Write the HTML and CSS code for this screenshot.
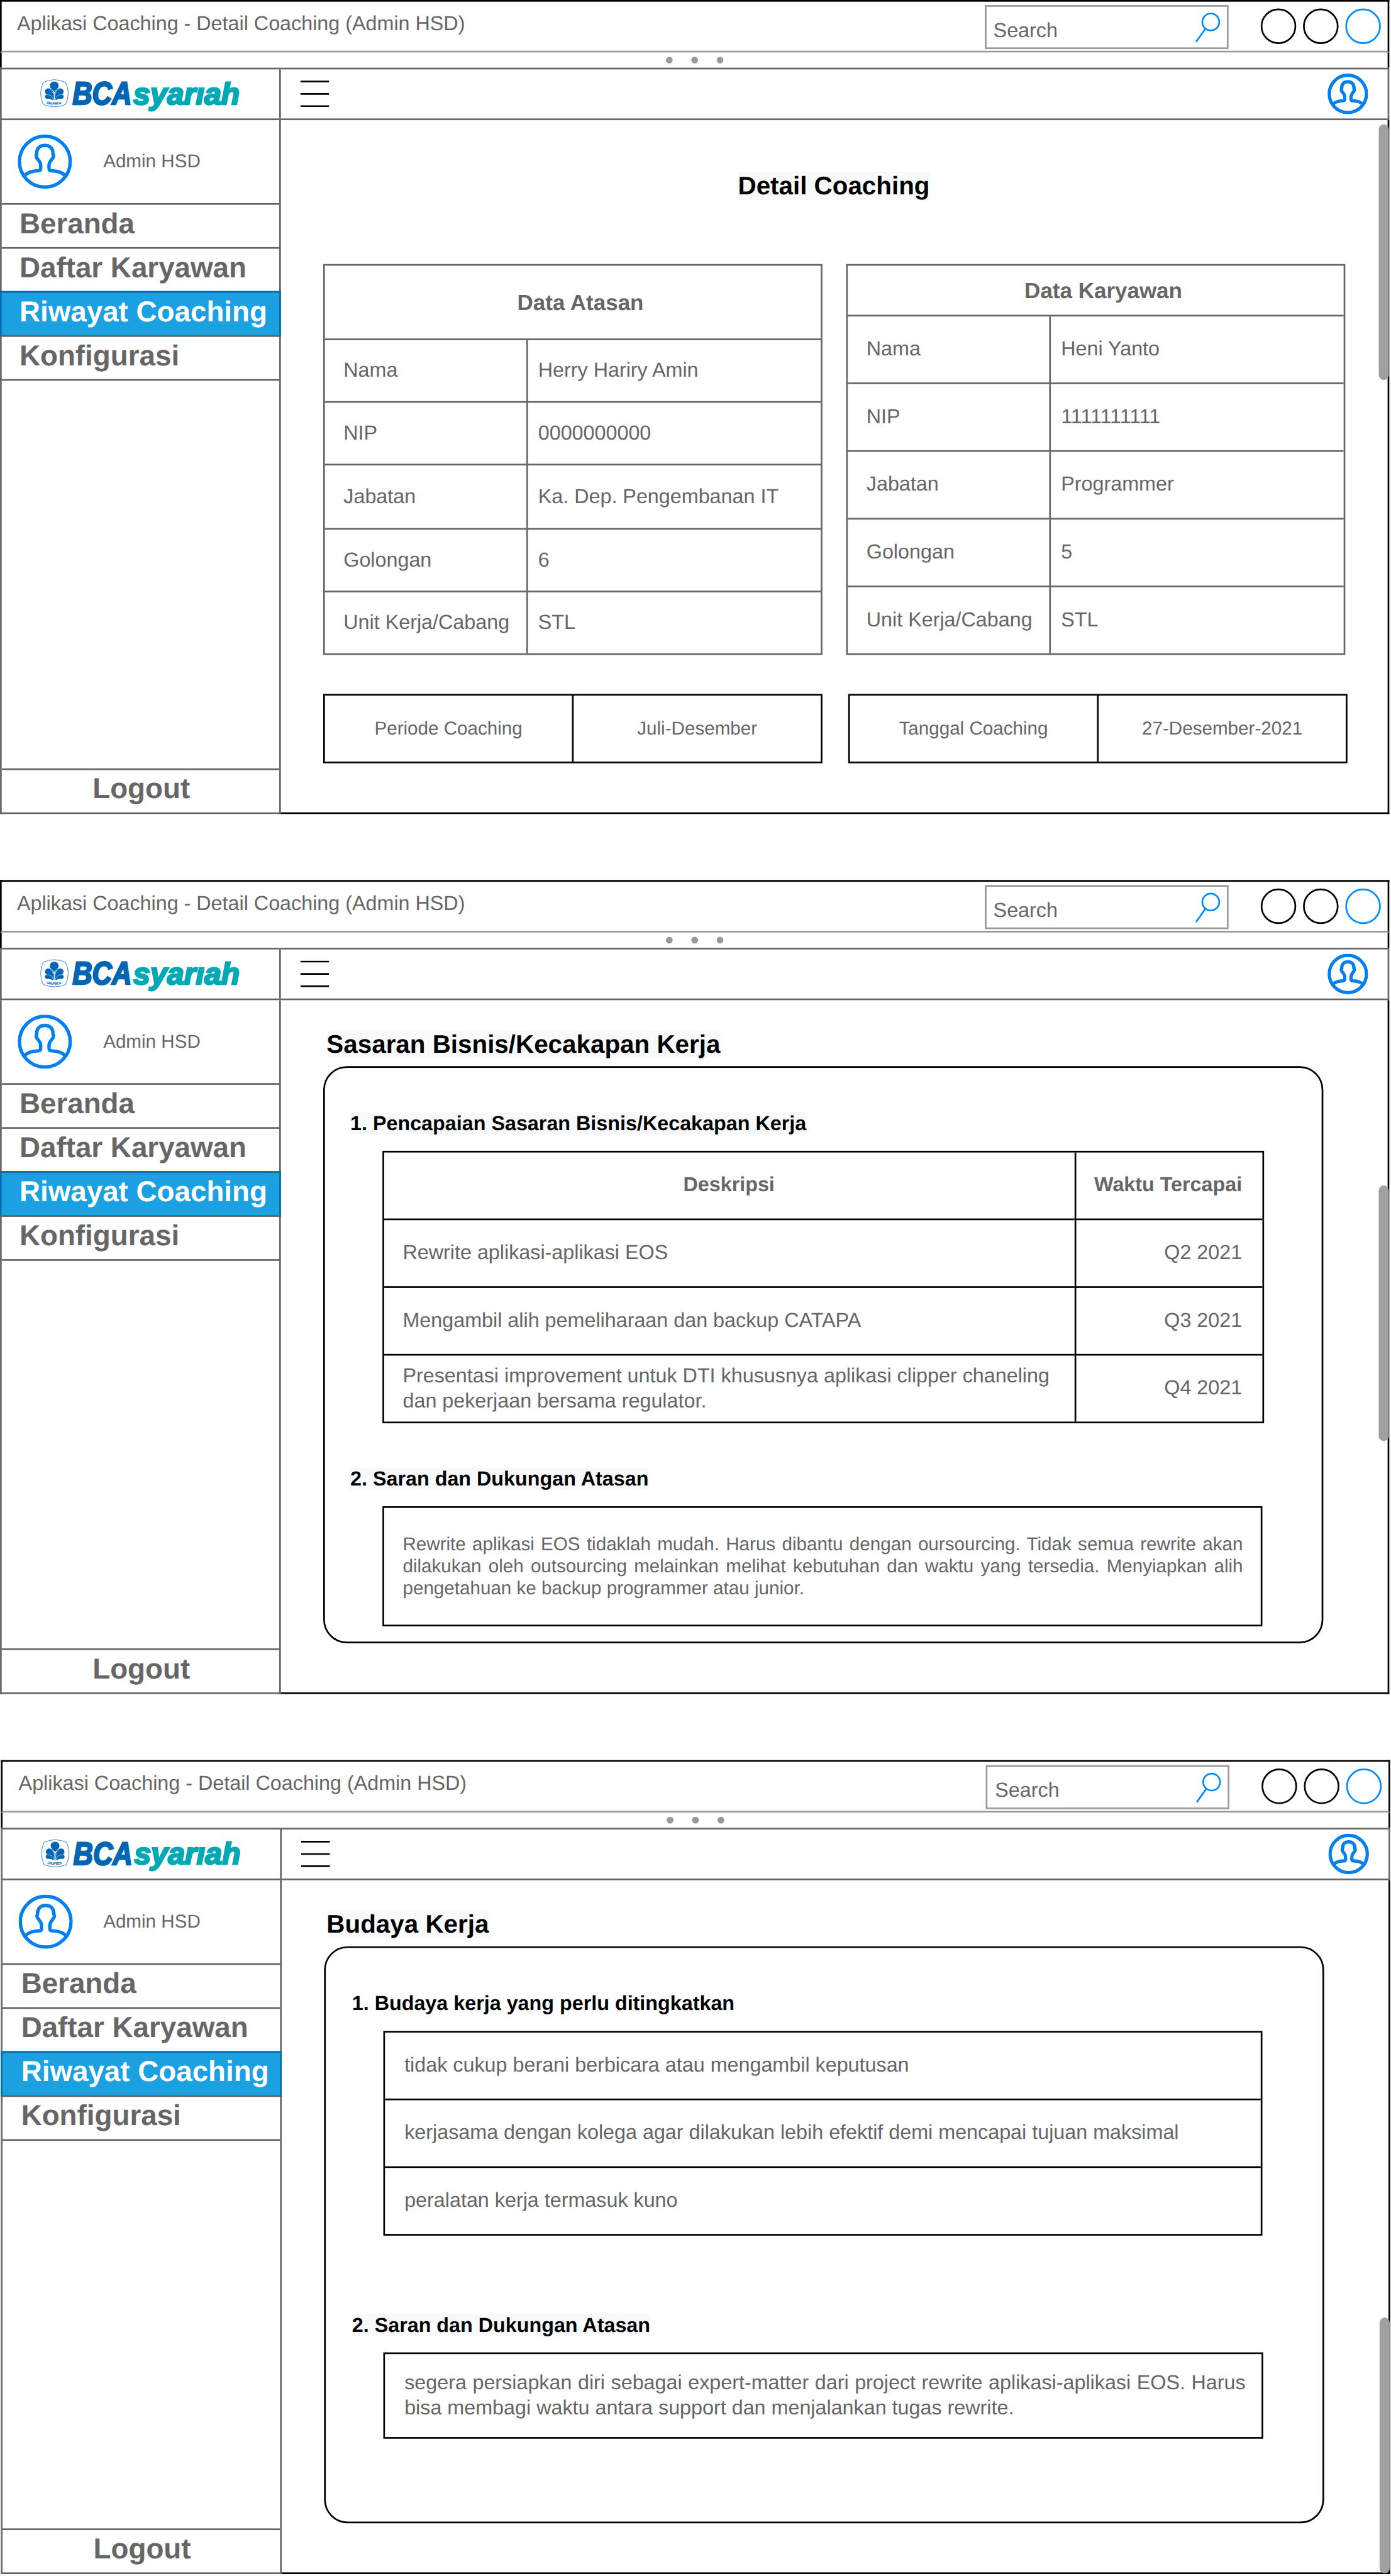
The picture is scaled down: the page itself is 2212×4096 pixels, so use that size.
FILE: index.html
```html
<!DOCTYPE html>
<html lang="id">
<head>
<meta charset="utf-8">
<title>Aplikasi Coaching - Detail Coaching</title>
<link rel="stylesheet" href="styles.css">
</head>
<body>
<svg class="sprites" width="0" height="0" aria-hidden="true">
  <symbol id="magnifier" viewBox="706 7 16 19">
    <circle cx="715.5" cy="13" r="5"/>
    <path d="M712.3 17 L706.8 24.8"/>
  </symbol>
  <symbol id="person" viewBox="-16 -16 32 32">
    <path d="M-11.8 8.1C-10 6.2-6.5 5.5-3.8 5.4Q-2.6 5.4-2.5 4.2C-2.3 1.6-2.5.7-3.8-.9C-5-2.2-5.6-3.3-4.8-4.4C-5-7.8-3-9.6 0-9.6C3-9.6 5-7.8 4.8-4.4C5.6-3.3 5-2.2 3.8-.9C2.5.7 2.3 1.6 2.5 4.2Q2.6 5.4 3.8 5.4C6.5 5.5 10 6.2 11.8 8.1"/>
  </symbol>
  <symbol id="menu-lines" viewBox="0 0 17 16">
    <path d="M0 .7H17M0 8H17M0 15.2H17"/>
  </symbol>
  <symbol id="bca" viewBox="23 46 120 22">
    <g transform="translate(15 40) scale(.0861 .08333)">
      <path fill="none" stroke="#0066b3" stroke-width="3.4" d="M122 104Q197 66 276 104Q312 180 276 261Q199 293 122 261Q88 180 122 104Z"/>
      <g fill="#0066b3">
        <path d="M197 172C192 158 168 150 168 129C168 110 181 99 198 99C215 99 228 110 228 129C228 150 205 158 200 172Z"/>
        <path id="leaf" d="M197 229L197 190C192 165 178 147 158 147C143 147 135 158 135 170C135 180 140 187 147 191C136 193 134 198 134 207C134 216 142 221 152 221C165 219 178 222 183 229Z"/>
        <use href="#leaf" transform="matrix(-1 0 0 1 397 0)"/>
      </g>
      <path fill="none" stroke="#fff" stroke-width="2.6" d="M147 192C172 190 190 206 191 230M172 154C190 172 196 190 196 230M250 192C225 190 207 206 206 230M225 154C207 172 201 190 201 230"/>
    </g>
    <path id="ring" fill="none" d="M27.4 61.3Q32.1 62.4 36.8 61.3"/>
    <text class="logo-group"><textPath href="#ring" textLength="9">GRUP BCA</textPath></text>
    <text class="logo-bca" x="42.8" y="61.7" textLength="35" lengthAdjust="spacingAndGlyphs">BCA</text>
    <text class="logo-syariah" x="78.8" y="61.6" textLength="62.9" lengthAdjust="spacingAndGlyphs">syarıah</text>
  </symbol>
</svg>

<section class="window">
  <div class="titlebar">
    <span class="title">Aplikasi Coaching - Detail Coaching (Admin HSD)</span>
    <div class="search"><span>Search</span><svg class="magnifier"><use href="#magnifier"/></svg></div>
    <i class="knob"></i><i class="knob"></i><i class="knob knob-blue"></i>
  </div>
  <div class="grip"><i></i><i></i><i></i></div>
  <div class="header">
    <div class="brand"><svg class="logo"><use href="#bca"/></svg></div>
    <svg class="menu"><use href="#menu-lines"/></svg>
    <svg class="avatar avatar-small" viewBox="-16 -16 32 32"><circle r="14.67"/><use href="#person" x="-16" y="-16" width="32" height="32"/></svg>
  </div>
  <div class="body">
    <nav class="sidebar">
      <div class="user"><svg class="avatar" viewBox="-16 -16 32 32"><circle r="15"/><use href="#person" x="-16" y="-16" width="32" height="32"/></svg><span>Admin HSD</span></div>
      <a class="item">Beranda</a>
      <a class="item">Daftar Karyawan</a>
      <a class="item active">Riwayat Coaching</a>
      <a class="item">Konfigurasi</a>
      <a class="item logout">Logout</a>
    </nav>
    <main class="main">
      <h1 class="page-title"><mark>Detail Coaching</mark></h1>
      <div class="people">
        <div class="data atasan">
          <b>Data Atasan</b>
          <span>Nama</span><span>Herry Hariry Amin</span>
          <span>NIP</span><span>0000000000</span>
          <span>Jabatan</span><span>Ka. Dep. Pengembanan IT</span>
          <span>Golongan</span><span>6</span>
          <span>Unit Kerja/Cabang</span><span>STL</span>
        </div>
        <div class="data karyawan">
          <b>Data Karyawan</b>
          <span>Nama</span><span>Heni Yanto</span>
          <span>NIP</span><span>1111111111</span>
          <span>Jabatan</span><span>Programmer</span>
          <span>Golongan</span><span>5</span>
          <span>Unit Kerja/Cabang</span><span>STL</span>
        </div>
      </div>
      <div class="dates">
        <div class="date"><span>Periode Coaching</span><span>Juli-Desember</span></div>
        <div class="date"><span>Tanggal Coaching</span><span>27-Desember-2021</span></div>
      </div>
    </main>
  </div>
  <i class="scroll scroll-top"></i>
</section>

<section class="window">
  <div class="titlebar">
    <span class="title">Aplikasi Coaching - Detail Coaching (Admin HSD)</span>
    <div class="search"><span>Search</span><svg class="magnifier"><use href="#magnifier"/></svg></div>
    <i class="knob"></i><i class="knob"></i><i class="knob knob-blue"></i>
  </div>
  <div class="grip"><i></i><i></i><i></i></div>
  <div class="header">
    <div class="brand"><svg class="logo"><use href="#bca"/></svg></div>
    <svg class="menu"><use href="#menu-lines"/></svg>
    <svg class="avatar avatar-small" viewBox="-16 -16 32 32"><circle r="14.67"/><use href="#person" x="-16" y="-16" width="32" height="32"/></svg>
  </div>
  <div class="body">
    <nav class="sidebar">
      <div class="user"><svg class="avatar" viewBox="-16 -16 32 32"><circle r="15"/><use href="#person" x="-16" y="-16" width="32" height="32"/></svg><span>Admin HSD</span></div>
      <a class="item">Beranda</a>
      <a class="item">Daftar Karyawan</a>
      <a class="item active">Riwayat Coaching</a>
      <a class="item">Konfigurasi</a>
      <a class="item logout">Logout</a>
    </nav>
    <main class="main">
      <h1 class="section-title"><mark>Sasaran Bisnis/Kecakapan Kerja</mark></h1>
      <div class="panel">
        <h2><mark>1. Pencapaian Sasaran Bisnis/Kecakapan Kerja</mark></h2>
        <div class="goals">
          <b>Deskripsi</b><b>Waktu Tercapai</b>
          <span>Rewrite aplikasi-aplikasi EOS</span><span>Q2 2021</span>
          <span>Mengambil alih pemeliharaan dan backup CATAPA</span><span>Q3 2021</span>
          <span class="two-lines">Presentasi improvement untuk DTI khususnya aplikasi clipper chaneling<br>dan pekerjaan bersama regulator.</span><span>Q4 2021</span>
        </div>
        <h2 class="advice-title"><mark>2. Saran dan Dukungan Atasan</mark></h2>
        <div class="advice"><p>Rewrite aplikasi EOS tidaklah mudah. Harus dibantu dengan oursourcing. Tidak semua rewrite akan dilakukan oleh outsourcing melainkan melihat kebutuhan dan waktu yang tersedia. Menyiapkan alih pengetahuan ke backup programmer atau junior.</p></div>
      </div>
    </main>
  </div>
  <i class="scroll scroll-middle"></i>
</section>

<section class="window shifted">
  <div class="titlebar">
    <span class="title">Aplikasi Coaching - Detail Coaching (Admin HSD)</span>
    <div class="search"><span>Search</span><svg class="magnifier"><use href="#magnifier"/></svg></div>
    <i class="knob"></i><i class="knob"></i><i class="knob knob-blue"></i>
  </div>
  <div class="grip"><i></i><i></i><i></i></div>
  <div class="header">
    <div class="brand"><svg class="logo"><use href="#bca"/></svg></div>
    <svg class="menu"><use href="#menu-lines"/></svg>
    <svg class="avatar avatar-small" viewBox="-16 -16 32 32"><circle r="14.67"/><use href="#person" x="-16" y="-16" width="32" height="32"/></svg>
  </div>
  <div class="body">
    <nav class="sidebar">
      <div class="user"><svg class="avatar" viewBox="-16 -16 32 32"><circle r="15"/><use href="#person" x="-16" y="-16" width="32" height="32"/></svg><span>Admin HSD</span></div>
      <a class="item">Beranda</a>
      <a class="item">Daftar Karyawan</a>
      <a class="item active">Riwayat Coaching</a>
      <a class="item">Konfigurasi</a>
      <a class="item logout">Logout</a>
    </nav>
    <main class="main">
      <h1 class="section-title"><mark>Budaya Kerja</mark></h1>
      <div class="panel">
        <h2>1. Budaya kerja yang perlu ditingkatkan</h2>
        <div class="habits">
          <span>tidak cukup berani berbicara atau mengambil keputusan</span>
          <span>kerjasama dengan kolega agar dilakukan lebih efektif demi mencapai tujuan maksimal</span>
          <span>peralatan kerja termasuk kuno</span>
        </div>
        <h2 class="advice-title"><mark>2. Saran dan Dukungan Atasan</mark></h2>
        <div class="advice"><p>segera persiapkan diri sebagai expert-matter dari project rewrite aplikasi-aplikasi EOS. Harus bisa membagi waktu antara support dan menjalankan tugas rewrite.</p></div>
      </div>
    </main>
  </div>
  <i class="scroll scroll-bottom"></i>
</section>
</body>
</html>
```
FILE: styles.css
```css
/* The sheet is laid out on an 822 x 1522 grid. Zoom gives quarter-unit
   precision, the transform then fits the sheet to the window. */
html {
  width: 2212px;
  height: 4096px;
  overflow: hidden;
  background: #fff;
}

* {
  box-sizing: border-box;
}

body {
  zoom: 4;
  width: 822px;
  height: 1522px;
  margin: 0;
  transform: scale(.67275);
  transform-origin: 0 0;
  font: 12px/14px "Liberation Sans", Arial, sans-serif;
  text-rendering: geometricPrecision;
  color: #666;
}

h1, h2, p {
  margin: 0;
}

mark {
  background: #f8f9fa;
  color: inherit;
}

.sprites {
  position: absolute;
}

symbol {
  overflow: visible;
}

/* Window frame */
.window {
  position: relative;
  width: 821px;
  height: 481px;
  margin-bottom: 39px;
}

.titlebar {
  display: flex;
  align-items: flex-start;
  height: 31px;
  padding: 0 4px 0 9px;
  border: 1px solid #000;
  border-bottom-color: #999;
}

.title {
  margin-top: 6px;
  white-space: nowrap;
}

.search {
  display: flex;
  width: 144px;
  height: 26px;
  margin: 2px 19px 0 auto;
  padding: 0 3px 0 4px;
  border: 1px solid #999;
}

.search span {
  margin-top: 7px;
}

.magnifier {
  width: 16px;
  height: 19px;
  margin: 3px 0 0 auto;
  fill: none;
  stroke: #008cff;
}

.knob {
  width: 21px;
  height: 21px;
  margin-top: 4px;
  border: 1px solid #000;
  border-radius: 50%;
}

.knob + .knob {
  margin-left: 4px;
}

.knob-blue {
  border-color: #008cff;
}

.grip {
  display: flex;
  justify-content: center;
  gap: 11px;
  height: 9px;
  padding-top: 2.5px;
  border: solid #000;
  border-width: 0 1px;
}

.grip i {
  width: 4px;
  height: 4px;
  border-radius: 50%;
  background: #999;
}

.header {
  display: flex;
  height: 31px;
  border: 1px solid #666;
}

.brand {
  width: 165px;
  padding: 5px 0 0 22px;
  border-right: 1px solid #666;
}

.logo {
  display: block;
  width: 120px;
  height: 22px;
  overflow: visible;
}

.logo-bca,
.logo-syariah {
  font: italic bold 19px "Liberation Sans", Arial, sans-serif;
  fill: #0066b3;
  stroke: #0066b3;
  stroke-width: 1px;
}

.logo-syariah {
  font-size: 18px;
  fill: #00a8b5;
  stroke: #00a8b5;
}

.logo-group {
  font: bold 2.1px "Liberation Sans", Arial, sans-serif;
  fill: #0066b3;
}

.menu {
  width: 17px;
  height: 16px;
  margin: 6.5px 0 0 11.5px;
  stroke: #000;
}

.avatar {
  flex: none;
  width: 32px;
  height: 32px;
  fill: none;
  stroke: #0080f0;
  stroke-width: 2;
}

.avatar-small {
  width: 24px;
  height: 24px;
  margin: 2.5px 11.5px 0 auto;
  stroke-width: 2.6;
}

/* Sidebar */
.body {
  display: flex;
  height: 410px;
}

.sidebar {
  display: flex;
  flex-direction: column;
  width: 166px;
  border: solid #666;
  border-width: 0 1px 1px;
}

.user {
  display: flex;
  height: 50px;
  padding: 8.5px 0 0 9.5px;
  border-bottom: 1px solid #666;
}

.user span {
  margin: 9.5px 0 0 18.5px;
  font-size: 11px;
  line-height: 13px;
}

.item {
  height: 26px;
  padding: .5px 0 0 10.5px;
  border-bottom: 1px solid #666;
  font-size: 17px;
  font-weight: bold;
  line-height: 21px;
  white-space: nowrap;
}

.active {
  height: 27px;
  margin: -1px -1px 0;
  padding-left: 10.5px;
  border: solid #006eaf;
  border-width: 1px 1px 0;
  border-bottom: 1px solid #666;
  background: #1ba1e2;
  color: #fff;
}

.logout {
  margin-top: auto;
  padding-left: 1px;
  border-top: 1px solid #666;
  border-bottom: 0;
  text-align: center;
}

/* Content */
.main {
  flex: 1;
  padding-left: 25px;
  border: solid #000;
  border-width: 0 1px 1px 0;
}

.page-title,
.section-title {
  font-size: 15px;
  line-height: 17px;
  color: #000;
}

.page-title {
  margin: 30.5px 0 37.5px -25.5px;
  text-align: center;
}

.people {
  display: flex;
  gap: 14px;
}

.data {
  display: grid;
  grid-template-columns: 120px 1fr;
  width: 295px;
  height: 231px;
  border: 1px solid #666;
}

.atasan {
  grid-template-rows: 44px 37px 37px 38px 37px 36px;
}

.karyawan {
  grid-template-rows: 30px 40px 40px 40px 40px 39px;
}

.data > * {
  display: flex;
  align-items: center;
  border-bottom: 1px solid #666;
}

.data > b {
  grid-column: 1 / 3;
  justify-content: center;
  padding: 1px 0 0 9px;
  font-size: 13px;
}

.data > span {
  padding-left: 6px;
}

.data > span:nth-child(even) {
  padding-left: 11px;
  border-right: 1px solid #666;
}

.karyawan > span {
  padding-bottom: .5px;
}

.data > :nth-last-child(-n+2) {
  border-bottom: 0;
}

.dates {
  display: flex;
  gap: 15.25px;
  margin-top: 23px;
}

.date {
  display: flex;
  width: 295px;
  height: 41px;
  border: 1px solid #000;
  font-size: 11px;
}

.date span {
  flex: 1;
  line-height: 39px;
  text-align: center;
}

.date span + span {
  border-left: 1px solid #000;
}

.section-title {
  margin: 17.5px 0 4.5px 2px;
}

.panel {
  width: 591px;
  height: 341px;
  padding: 26px 0 0 15px;
  border: 1px solid #000;
  border-radius: 14px;
}

.panel h2 {
  font-size: 12px;
  line-height: 14px;
  color: #000;
}

.goals,
.habits,
.advice {
  margin: 9px 0 0 19px;
  border: 1px solid #000;
}

.goals {
  display: grid;
  grid-template-columns: 408px 111px;
  grid-template-rows: 40px 40px 40px 39px;
  width: 521px;
}

.goals > * {
  display: flex;
  align-items: center;
  padding: 0 10px .5px 11px;
  border-bottom: 1px solid #000;
  line-height: 15px;
}

.goals > b {
  justify-content: center;
  padding-left: 9.5px;
  white-space: nowrap;
}

.goals > :nth-child(even) {
  justify-content: flex-end;
  padding-right: 12px;
  border-left: 1px solid #000;
}

.goals > :nth-last-child(-n+2) {
  border-bottom: 0;
}

.goals > .two-lines {
  padding-bottom: 0;
}

.panel .advice-title {
  margin-top: 26px;
}

.advice {
  display: flex;
  align-items: center;
  width: 520px;
  height: 71px;
  padding: 0 10.5px 0 11px;
  font-size: 11px;
  line-height: 13px;
  text-align: justify;
}

/* The last window sits half a unit to the right */
.shifted {
  left: .5px;
  margin-bottom: 0;
}

.shifted .title,
.shifted .search span {
  padding-left: .5px;
}

.shifted .user span {
  margin-left: 18px;
}

.shifted .item {
  padding-left: 11px;
}

.shifted .logout {
  padding-left: 1px;
}

.shifted .section-title {
  margin-left: 1.5px;
}

.shifted .panel {
  padding-left: 15.5px;
}

.habits {
  width: 519.5px;
  margin-left: 18.5px;
}

.habits span {
  display: block;
  height: 40px;
  padding-left: 11.5px;
  border-bottom: 1px solid #000;
  line-height: 38.5px;
}

.habits span:last-child {
  height: 39px;
  border-bottom: 0;
}

.shifted .panel .advice-title {
  margin-top: 46px;
}

.shifted .advice {
  height: 51px;
  margin-left: 18.5px;
  padding: 0 9.5px 0 11.5px;
  font-size: 12px;
  line-height: 15px;
}

/* Scroll handles */
.scroll {
  position: absolute;
  left: 814.75px;
  width: 6px;
  height: 151px;
  border-radius: 3px;
  background: #a0a0a0;
}

.scroll-top {
  top: 73.5px;
}

.scroll-middle {
  top: 180.5px;
}

.scroll-bottom {
  top: 329.5px;
}
```
